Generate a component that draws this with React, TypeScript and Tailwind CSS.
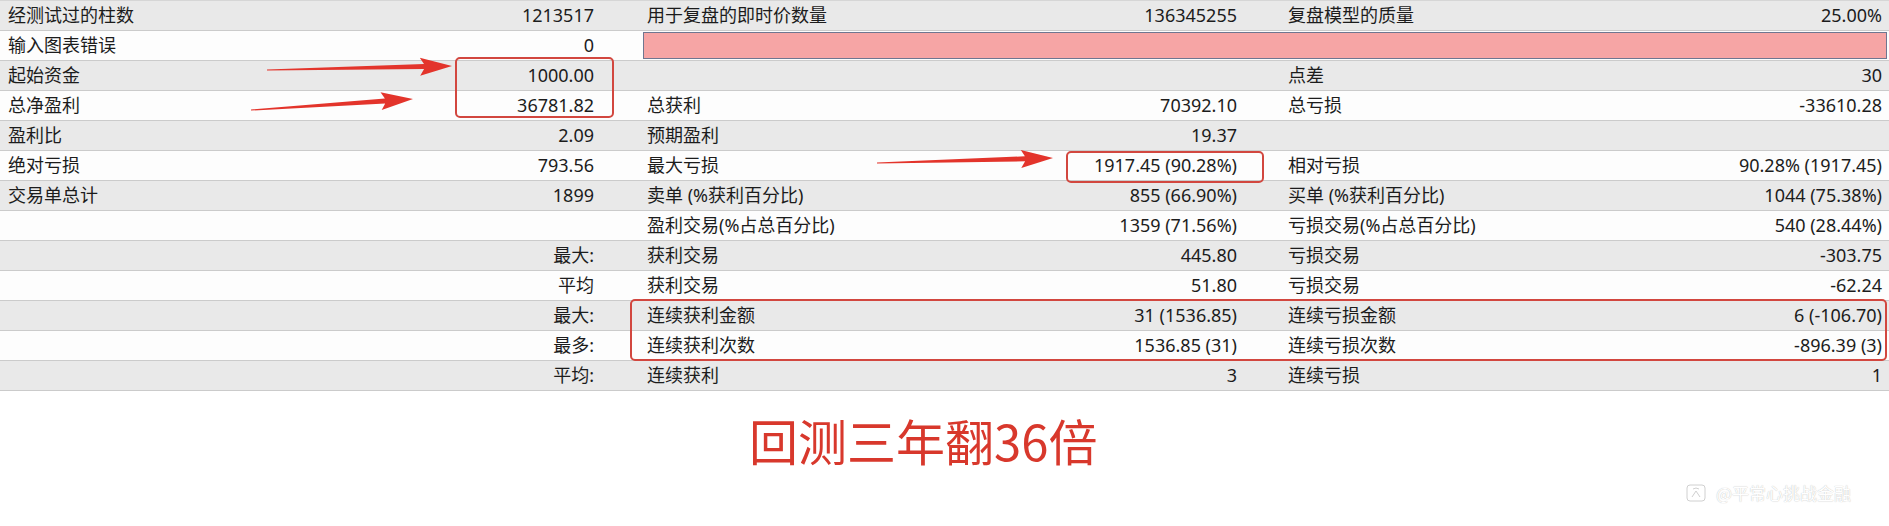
import React from "react";

type Cell = [string, string];
type Row = { gray: boolean; c1: Cell; c2?: Cell; c3?: Cell; pink?: boolean };

const rows: Row[] = [
  { gray: true, c1: ["经测试过的柱数", "1213517"], c2: ["用于复盘的即时价数量", "136345255"], c3: ["复盘模型的质量", "25.00%"] },
  { gray: false, c1: ["输入图表错误", "0"], pink: true },
  { gray: true, c1: ["起始资金", "1000.00"], c2: ["", ""], c3: ["点差", "30"] },
  { gray: false, c1: ["总净盈利", "36781.82"], c2: ["总获利", "70392.10"], c3: ["总亏损", "-33610.28"] },
  { gray: true, c1: ["盈利比", "2.09"], c2: ["预期盈利", "19.37"], c3: ["", ""] },
  { gray: false, c1: ["绝对亏损", "793.56"], c2: ["最大亏损", "1917.45 (90.28%)"], c3: ["相对亏损", "90.28% (1917.45)"] },
  { gray: true, c1: ["交易单总计", "1899"], c2: ["卖单 (%获利百分比)", "855 (66.90%)"], c3: ["买单 (%获利百分比)", "1044 (75.38%)"] },
  { gray: false, c1: ["", ""], c2: ["盈利交易(%占总百分比)", "1359 (71.56%)"], c3: ["亏损交易(%占总百分比)", "540 (28.44%)"] },
  { gray: true, c1: ["", "最大:"], c2: ["获利交易", "445.80"], c3: ["亏损交易", "-303.75"] },
  { gray: false, c1: ["", "平均"], c2: ["获利交易", "51.80"], c3: ["亏损交易", "-62.24"] },
  { gray: true, c1: ["", "最大:"], c2: ["连续获利金额", "31 (1536.85)"], c3: ["连续亏损金额", "6 (-106.70)"] },
  { gray: false, c1: ["", "最多:"], c2: ["连续获利次数", "1536.85 (31)"], c3: ["连续亏损次数", "-896.39 (3)"] },
  { gray: true, c1: ["", "平均:"], c2: ["连续获利", "3"], c3: ["连续亏损", "1"] },
];

function arrowPoints(x1: number, y1: number, x2: number, y2: number, headLen: number, headW: number, shaftW: number) {
  const dx = x2 - x1;
  const dy = y2 - y1;
  const len = Math.hypot(dx, dy);
  const ux = dx / len;
  const uy = dy / len;
  const nx = -uy;
  const ny = ux;
  const bx = x2 - ux * headLen;
  const by = y2 - uy * headLen;
  const pts: [number, number][] = [
    [x1 + nx * 0.6, y1 + ny * 0.6],
    [bx + (nx * shaftW) / 2, by + (ny * shaftW) / 2],
    [bx - ux * 4 + (nx * headW) / 2, by - uy * 4 + (ny * headW) / 2],
    [x2, y2],
    [bx - ux * 4 - (nx * headW) / 2, by - uy * 4 - (ny * headW) / 2],
    [bx - (nx * shaftW) / 2, by - (ny * shaftW) / 2],
    [x1 - nx * 0.6, y1 - ny * 0.6],
  ];
  return pts.map((p) => `${p[0].toFixed(1)},${p[1].toFixed(1)}`).join(" ");
}

function Pair({ cell, pl, pr }: { cell?: Cell; pl: string; pr: string }) {
  return (
    <div className={`flex items-center justify-between ${pl} ${pr}`}>
      <span className="whitespace-nowrap">{cell ? cell[0] : ""}</span>
      <span className="whitespace-nowrap">{cell ? cell[1] : ""}</span>
    </div>
  );
}

export default function App() {
  return (
    <div className="relative w-[1889px] h-[526px] overflow-hidden bg-white font-['Noto_Sans','Noto_Sans_CJK_SC',sans-serif] text-[18px] text-[#1c1c1c]">
      <div className="border-t border-[#d6d6d6]">
        {rows.map((r, i) => (
          <div
            key={i}
            className={`grid grid-cols-[620px_642px_627px] h-[30px] border-b border-[#cbcbcb] ${r.gray ? "bg-[#e9e9e9]" : "bg-[#fdfdfd]"}`}
          >
            <Pair cell={r.c1} pl="pl-[8px]" pr="pr-[26px]" />
            {r.pink ? (
              <div className="col-span-2 flex items-center pl-[23px] pr-[2px]">
                <div className="h-[27px] w-full border border-[#6f7690] bg-[#f6a5a5]" />
              </div>
            ) : (
              <>
                <Pair cell={r.c2} pl="pl-[27px]" pr="pr-[25px]" />
                <Pair cell={r.c3} pl="pl-[26px]" pr="pr-[7px]" />
              </>
            )}
          </div>
        ))}
      </div>

      <div className="mt-[24px] ml-[749px] leading-none text-[49px] text-[#d8382c] font-['Noto_Sans_CJK_SC','Noto_Sans',sans-serif]">
        回测三年翻36倍
      </div>

      {/* annotation boxes */}
      <div className="absolute left-[455px] top-[57px] w-[159px] h-[61px] rounded-[5px] border-2 border-[#d2473f]" />
      <div className="absolute left-[1066px] top-[151px] w-[198px] h-[32px] rounded-[5px] border-2 border-[#d2473f]" />
      <div className="absolute left-[630px] top-[299px] w-[1257px] h-[62px] rounded-[5px] border-2 border-[#d2473f]" />

      <svg className="absolute inset-0 pointer-events-none" width="1889" height="526" viewBox="0 0 1889 526">
        <polygon points={arrowPoints(267, 70, 452, 66, 28, 18, 5)} fill="#e3342b" />
        <polygon points={arrowPoints(251, 110, 413, 99, 28, 18, 5)} fill="#e3342b" />
        <polygon points={arrowPoints(877, 163, 1053, 158, 28, 18, 5)} fill="#e3342b" />
      </svg>

      {/* watermark */}
      <div className="absolute left-[1686px] top-[480px] flex items-center gap-[10px] text-[17px] text-white [text-shadow:0_0_1px_#b0b0b0] font-['Noto_Sans_CJK_SC','Noto_Sans',sans-serif]">
        <svg width="20" height="22" viewBox="0 0 20 22">
          <path d="M4 3 h12 a3 3 0 0 1 3 3 v10 a3 3 0 0 1 -3 3 h-12 a3 3 0 0 1 -3 -3 v-10 a3 3 0 0 1 3 -3 z" fill="white" stroke="#d0d0d0" strokeWidth="1" />
          <path d="M7 7 q3 -2 6 0 M6 15 l4 -6 l4 6" fill="none" stroke="#d0d0d0" strokeWidth="1" />
        </svg>
        <span>@平常心挑战金融</span>
      </div>
    </div>
  );
}
